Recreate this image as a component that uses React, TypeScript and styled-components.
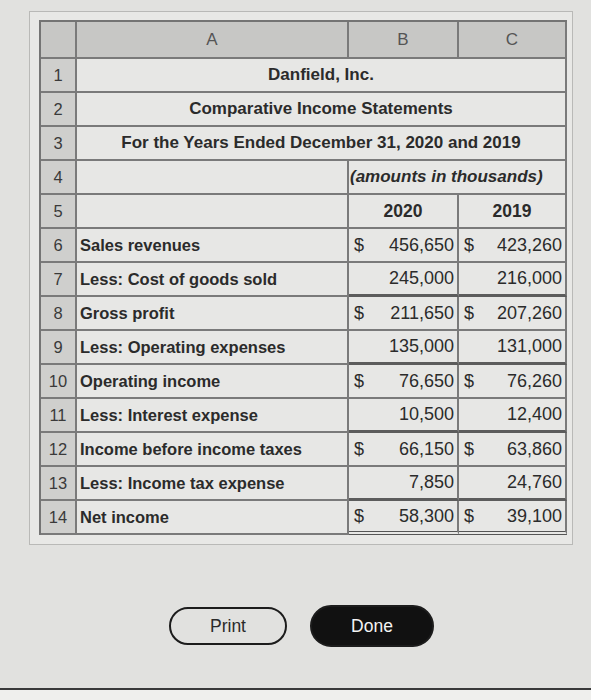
import React from 'react'
import styled, { createGlobalStyle } from 'styled-components'

const GlobalStyle = createGlobalStyle`
  html, body {
    margin: 0;
    padding: 0;
    background: #e1e1df;
  }
  body {
    font-family: 'Liberation Sans', Arial, sans-serif;
    color: #2b2b2b;
  }
`

const Page = styled.div`
  width: 591px;
  height: 700px;
  display: flex;
  flex-direction: column;
  background: #e1e1df;
  overflow: hidden;
`

const Frame = styled.div`
  margin: 11px 0 0 29px;
  width: 544px;
  padding: 8px 0 9px 9px;
  border: 1px solid #b9b9b7;
  background: #e8e8e6;
  box-sizing: border-box;
`

const Sheet = styled.div`
  display: grid;
  grid-template-columns: 36px 272px 110px 108px;
  grid-template-rows: 37px repeat(14, 34px);
  border-top: 2px solid #747474;
  border-left: 2px solid #747474;
  width: max-content;
`

const Cell = styled.div<{
  $span?: number
  $align?: 'left' | 'center' | 'right'
  $bold?: boolean
  $under?: 'single' | 'double'
}>`
  grid-column: span ${p => p.$span || 1};
  display: flex;
  align-items: center;
  justify-content: ${p =>
    p.$align === 'center' ? 'center' : p.$align === 'right' ? 'flex-end' : 'flex-start'};
  padding: 0 3px;
  border-right: 2px solid #7a7a7a;
  border-bottom: ${p =>
    p.$under === 'double'
      ? '4px double #555'
      : p.$under === 'single'
        ? '3px solid #5c5c5c'
        : '2px solid #7a7a7a'};
  background: #e7e7e5;
  font-size: 16.5px;
  font-weight: ${p => (p.$bold ? 700 : 400)};
  white-space: nowrap;
  box-sizing: border-box;
  overflow: visible;
`

const ColHead = styled(Cell)`
  background: #c7c7c5;
  color: #555;
  font-size: 17px;
  justify-content: center;
`

const RowNum = styled(Cell)`
  background: #cfcfcd;
  color: #3a3a3a;
  justify-content: center;
  padding: 0;
`

const Title = styled(Cell)`
  justify-content: center;
  font-weight: 700;
  font-size: 17px;
`

const Note = styled(Cell)`
  font-weight: 700;
  font-style: italic;
  font-size: 17px;
  padding-left: 1px;
`

const Year = styled(Cell)`
  justify-content: center;
  font-weight: 700;
  font-size: 17.5px;
`

const Money = styled(Cell)`
  justify-content: space-between;
  font-size: 18px;
  padding: 0 3px 0 5px;
`

const Buttons = styled.div`
  display: flex;
  gap: 23px;
  justify-content: center;
  padding-left: 12px;
  margin-top: 60px;
`

const Button = styled.button<{ $primary?: boolean }>`
  width: ${p => (p.$primary ? '124px' : '118px')};
  height: ${p => (p.$primary ? '42px' : '38px')};
  margin-top: ${p => (p.$primary ? '0' : '2px')};
  border-radius: 21px;
  border: 2px solid #1c1c1c;
  background: ${p => (p.$primary ? '#111' : 'transparent')};
  color: ${p => (p.$primary ? '#f4f4f4' : '#2a2a2a')};
  font-family: 'Liberation Sans', Arial, sans-serif;
  font-size: 17.5px;
  font-weight: ${p => (p.$primary ? 500 : 400)};
  cursor: pointer;
`

const Bottom = styled.div`
  margin-top: auto;
  height: 10px;
  border-top: 2px solid #3a3a3a;
  background: #efefed;
`

type Line = {
  n: number
  label: string
  b: string
  c: string
  dollar?: boolean
  under?: 'single' | 'double'
}

const lines: Line[] = [
  { n: 6, label: 'Sales revenues', b: '456,650', c: '423,260', dollar: true },
  { n: 7, label: 'Less: Cost of goods sold', b: '245,000', c: '216,000', under: 'single' },
  { n: 8, label: 'Gross profit', b: '211,650', c: '207,260', dollar: true },
  { n: 9, label: 'Less: Operating expenses', b: '135,000', c: '131,000', under: 'single' },
  { n: 10, label: 'Operating income', b: '76,650', c: '76,260', dollar: true },
  { n: 11, label: 'Less: Interest expense', b: '10,500', c: '12,400', under: 'single' },
  { n: 12, label: 'Income before income taxes', b: '66,150', c: '63,860', dollar: true },
  { n: 13, label: 'Less: Income tax expense', b: '7,850', c: '24,760', under: 'single' },
  { n: 14, label: 'Net income', b: '58,300', c: '39,100', dollar: true, under: 'double' },
]

export default function App() {
  return (
    <Page>
      <GlobalStyle />
      <Frame>
        <Sheet>
          <ColHead />
          <ColHead>A</ColHead>
          <ColHead>B</ColHead>
          <ColHead>C</ColHead>

          <RowNum>1</RowNum>
          <Title $span={3}>Danfield, Inc.</Title>
          <RowNum>2</RowNum>
          <Title $span={3}>Comparative Income Statements</Title>
          <RowNum>3</RowNum>
          <Title $span={3}>For the Years Ended December 31, 2020 and 2019</Title>

          <RowNum>4</RowNum>
          <Cell />
          <Note $span={2}>(amounts in thousands)</Note>

          <RowNum>5</RowNum>
          <Cell />
          <Year>2020</Year>
          <Year>2019</Year>

          {lines.map(l => (
            <React.Fragment key={l.n}>
              <RowNum>{l.n}</RowNum>
              <Cell $bold>{l.label}</Cell>
              <Money $under={l.under}>
                <span>{l.dollar ? '$' : ''}</span>
                <span>{l.b}</span>
              </Money>
              <Money $under={l.under}>
                <span>{l.dollar ? '$' : ''}</span>
                <span>{l.c}</span>
              </Money>
            </React.Fragment>
          ))}
        </Sheet>
      </Frame>
      <Buttons>
        <Button>Print</Button>
        <Button $primary>Done</Button>
      </Buttons>
      <Bottom />
    </Page>
  )
}
